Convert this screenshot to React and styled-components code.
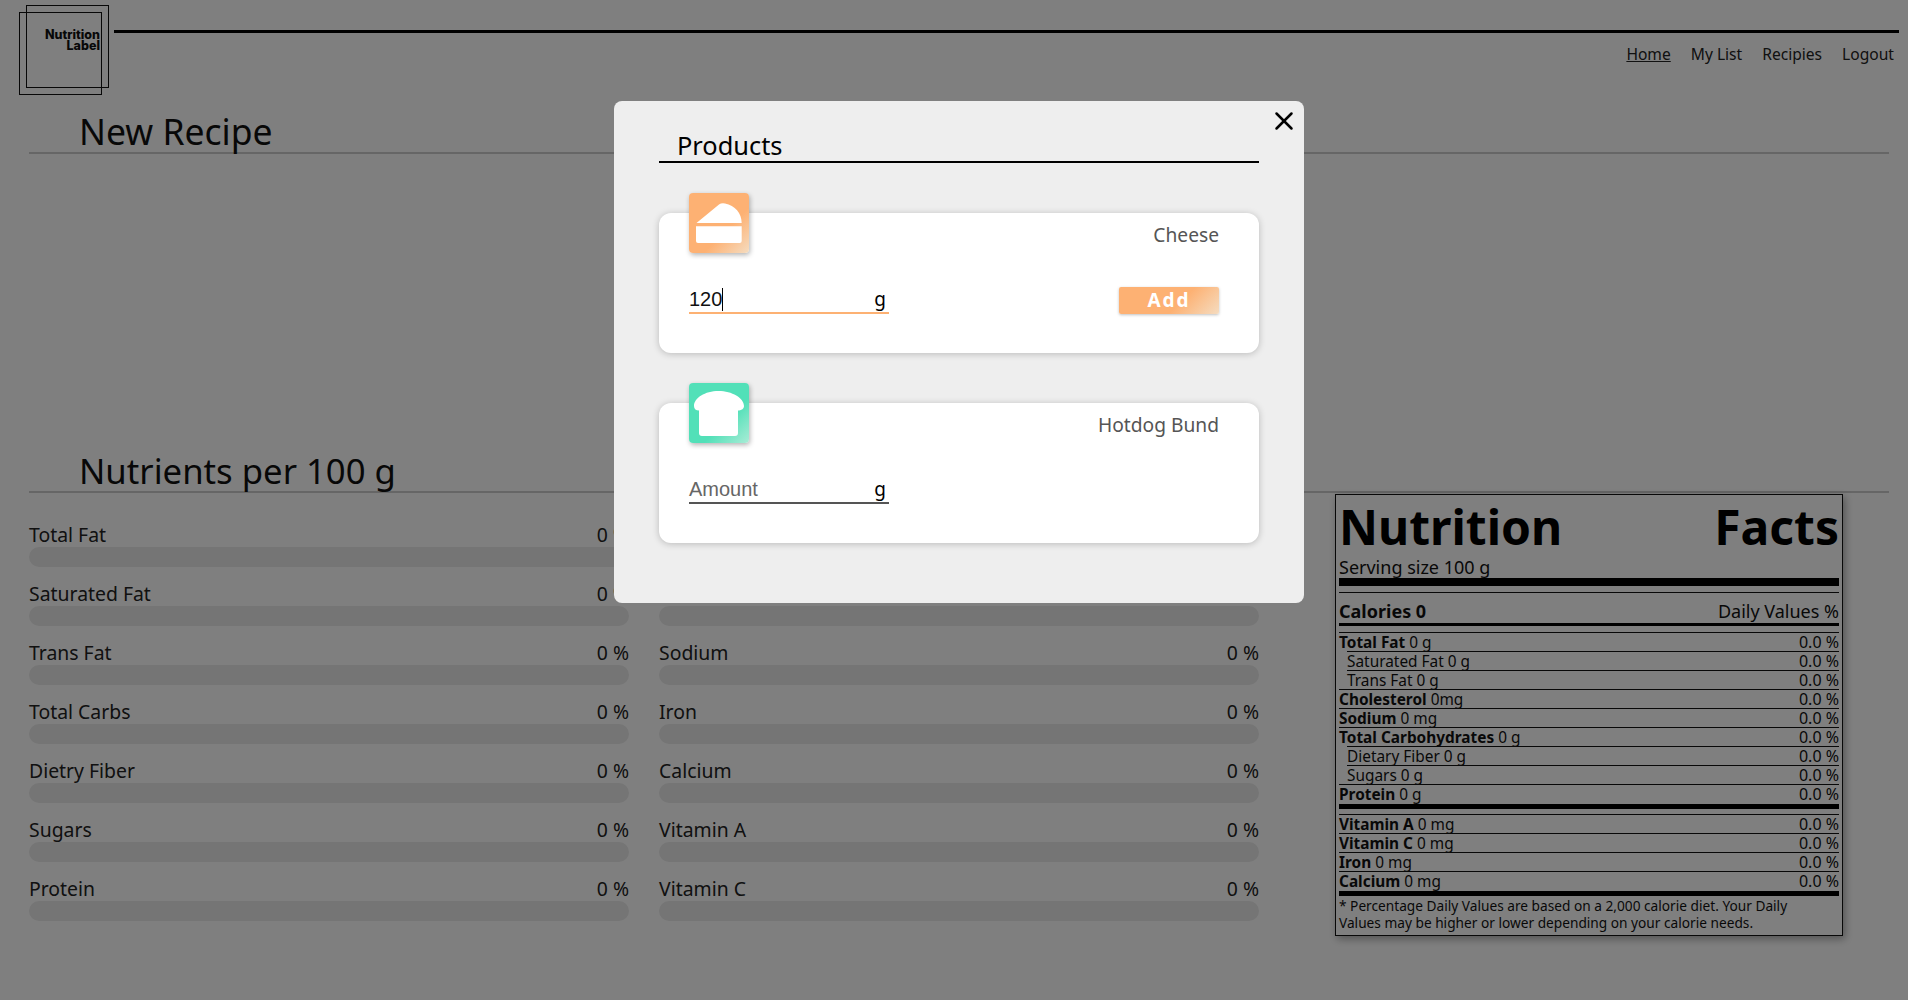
import React from "react";
import styled, { createGlobalStyle } from "styled-components";
import { X } from "lucide-react";

const Global = createGlobalStyle`
  html, body { margin: 0; padding: 0; background: #fff; }
  body { font-family: "Noto Sans", sans-serif; color: #222; overflow: hidden; }
  * { box-sizing: border-box; }
`;

const Page = styled.div`
  width: 1908px;
  height: 1000px;
  display: flex;
  flex-direction: column;
`;
const Header = styled.header`
  display: flex;
  height: 100px;
  padding: 5px 9px 0 19px;
`;
const Logo = styled.div`
  position: relative;
  width: 90px;
  height: 90px;
  flex: none;
`;
const LogoSquare = styled.span`
  position: absolute;
  width: 83px;
  height: 83px;
  border: 1px solid #111;
  ${(p) => (p.$back ? "left: 7px; top: 0;" : "left: 0; top: 7px;")}
`;
const LogoText = styled.div`
  position: absolute;
  right: 9px;
  top: 24px;
  text-align: right;
  font: 800 12.5px/11px Inter, sans-serif;
  color: #111;
`;
const HeaderMain = styled.div`
  flex: 1;
  margin-left: 5px;
  padding-top: 25px;
`;
const HeaderRule = styled.div`
  height: 3px;
  background: #000;
`;
const Nav = styled.nav`
  display: flex;
  justify-content: flex-end;
  gap: 20px;
  padding: 10px 5px 0 0;
  font-size: 15.6px;
  line-height: 22px;
`;
const NavLink = styled.a`
  color: #222;
  text-decoration: ${(p) => (p.$active ? "underline" : "none")};
`;
const SectionTitle = styled.h2`
  margin: ${(p) => p.$top}px 19px 0 29px;
  padding-left: 50px;
  height: ${(p) => p.$h}px;
  font-size: ${(p) => p.$size}px;
  line-height: 40px;
  font-weight: 400;
  color: #111;
  border-bottom: 2px solid #ccc;
`;
const Spacer = styled.div`
  height: 297px;
`;
const Body = styled.div`
  display: flex;
  align-items: flex-start;
  padding-left: 29px;
`;
const Grid = styled.div`
  width: 1230px;
  padding-top: 30px;
  display: grid;
  grid-template-columns: 600px 600px;
  column-gap: 30px;
  row-gap: 15px;
`;
const Nutrient = styled.div`
  display: flex;
  flex-direction: column;
`;
const NutrientHead = styled.div`
  display: flex;
  justify-content: space-between;
  height: 24px;
  font-size: 19.4px;
  line-height: 23px;
`;
const Bar = styled.div`
  height: 20px;
  border-radius: 10px;
  background: #ebebeb;
`;
const Label = styled.aside`
  width: 508px;
  height: 442px;
  margin: 1px 0 0 76px;
  padding: 0 3px;
  border: 1px solid #111;
  box-shadow: 2px 3px 8px rgba(0, 0, 0, 0.35);
  color: #111;
`;
const LabelTitle = styled.div`
  display: flex;
  justify-content: space-between;
  height: 60px;
  padding: 2px 0 0;
  font-size: 48px;
  line-height: 60px;
  font-weight: 700;
  color: #000;
`;
const Serving = styled.div`
  font-size: 18px;
  line-height: 24px;
  height: 23px;
`;
const ThickRule = styled.div`
  height: ${(p) => p.$h}px;
  background: #000;
`;
const ThinRule = styled.div`
  height: 1px;
  margin-top: ${(p) => p.$top}px;
  background: #111;
`;
const Calories = styled.div`
  display: flex;
  justify-content: space-between;
  height: 30px;
  padding-top: 3px;
  font-size: 18px;
  line-height: 30px;
`;
const Strong = styled.b`
  font-weight: 700;
`;
const FactRow = styled.div`
  display: flex;
  justify-content: space-between;
  height: 19px;
  font-size: 15.4px;
  line-height: 19px;
  white-space: nowrap;
`;
const FactName = styled.div`
  flex: 1;
  padding-left: ${(p) => (p.$sub ? 8 : 0)}px;
`;
const FactValue = styled.div`
  flex: none;
  font-size: 16px;
  line-height: 18px;
`;
const FactLine = styled.div`
  height: 1px;
  margin-left: ${(p) => (p.$sub ? 8 : 0)}px;
  margin-top: -1px;
  position: relative;
  background: #111;
`;
const Foot = styled.div`
  margin-top: 1px;
  font-size: 13.7px;
  line-height: 17px;
`;
const Overlay = styled.div`
  position: fixed;
  inset: 0;
  background: rgba(0, 0, 0, 0.5);
`;
const Modal = styled.div`
  position: fixed;
  left: 614px;
  top: 101px;
  width: 690px;
  height: 502px;
  padding: 0 45px;
  border-radius: 8px;
  background: #eee;
`;
const Close = styled.button`
  position: absolute;
  top: 5px;
  right: 5px;
  padding: 0;
  border: 0;
  background: none;
  display: flex;
  color: #000;
`;
const ModalTitle = styled.h3`
  margin: 0;
  height: 62px;
  padding: 28px 0 0 18px;
  font-size: 25.4px;
  line-height: 33px;
  font-weight: 400;
  color: #000;
  border-bottom: 2px solid #000;
`;
const Cards = styled.div`
  display: flex;
  flex-direction: column;
  gap: 50px;
  margin-top: 50px;
`;
const Card = styled.div`
  position: relative;
  height: 140px;
  padding: 0 40px 0 30px;
  border-radius: 12px;
  background: #fff;
  box-shadow: 0 1px 7px rgba(0, 0, 0, 0.22);
`;
const IconBox = styled.div`
  position: absolute;
  left: 30px;
  top: -20px;
  width: 60px;
  height: 60px;
  border-radius: 4px;
  background: linear-gradient(135deg, ${(p) => p.$from} 62%, ${(p) => p.$to} 100%);
  box-shadow: 1px 2px 5px rgba(0, 0, 0, 0.3);
`;
const Name = styled.div`
  padding-top: 10px;
  height: 60px;
  text-align: right;
  font-size: 19.2px;
  line-height: 24px;
  color: #555;
`;
const Row = styled.div`
  display: flex;
  justify-content: space-between;
  align-items: flex-end;
  height: 26px;
  margin-top: 15px;
`;
const Field = styled.div`
  width: 200px;
  height: 26px;
  display: flex;
  align-items: flex-start;
  justify-content: space-between;
  border-bottom: 2px solid ${(p) => p.$color};
  font: 20px/22px "Liberation Sans", sans-serif;
`;
const Value = styled.span`
  color: ${(p) => (p.$placeholder ? "#666" : "#111")};
  height: 23px;
  ${(p) => (p.$caret ? "border-right: 1px solid #000;" : "")}
`;
const Unit = styled.span`
  margin-top: -1px;
  padding-right: 3px;
  font: 19px/24px "Noto Sans", sans-serif;
  color: #000;
`;
const AddButton = styled.button`
  width: 100px;
  height: 27px;
  flex: none;
  padding: 0;
  border: 0;
  border-radius: 2px;
  background: linear-gradient(135deg, #fdb173 60%, #f5dcc0 100%);
  box-shadow: 0 1px 3px rgba(0, 0, 0, 0.25);
  color: #fff;
  font: 700 19px/27px "Noto Sans", sans-serif;
  letter-spacing: 2px;
`;

const left = ["Total Fat", "Saturated Fat", "Trans Fat", "Total Carbs", "Dietry Fiber", "Sugars", "Protein"];
const right = ["Cholesterol", "Salt", "Sodium", "Iron", "Calcium", "Vitamin A", "Vitamin C"];
const cells = left.flatMap((l, i) => [l, right[i]]);

const facts = [
  ["Total Fat", "0 g"],
  ["Saturated Fat", "0 g", true],
  ["Trans Fat", "0 g", true],
  ["Cholesterol", "0mg"],
  ["Sodium", "0 mg"],
  ["Total Carbohydrates", "0 g"],
  ["Dietary Fiber", "0 g", true],
  ["Sugars", "0 g", true],
  ["Protein", "0 g"],
];
const vitamins = [
  ["Vitamin A", "0 mg"],
  ["Vitamin C", "0 mg"],
  ["Iron", "0 mg"],
  ["Calcium", "0 mg"],
];

const Fact = ({ name, amount, sub, first }) => (
  <>
    {!first && <FactLine $sub={sub} />}
    <FactRow>
      <FactName $sub={sub}>
        {sub ? name : <Strong>{name}</Strong>} {amount}
      </FactName>
      <FactValue>0.0 %</FactValue>
    </FactRow>
  </>
);

const Cheese = () => (
  <svg width="60" height="60" viewBox="0 0 60 60" fill="#fff">
    <path d="M7.5 30 L30 11.5 Q32.5 9.6 36 10.4 C46 12.5 52.7 20 52.7 30 Z" />
    <path d="M7 33.3 H52.7 V48 Q52.7 50 50.7 50 H9 Q7 50 7 48 Z" />
  </svg>
);
const Bread = () => (
  <svg width="60" height="60" viewBox="0 0 60 60" fill="#fff">
    <path d="M29.5 8 C43 8 55 15 55 23 C55 26 52 27.5 49 27.5 L49 50 Q49 53 46 53 L13 53 Q10 53 10 50 L10 27.5 C7 27.5 5 26 5 23 C5 15 16 8 29.5 8 Z" />
  </svg>
);

export default function App() {
  return (
    <>
      <Global />
      <Page>
        <Header>
          <Logo>
            <LogoSquare $back />
            <LogoSquare />
            <LogoText>
              Nutrition
              <br />
              Label
            </LogoText>
          </Logo>
          <HeaderMain>
            <HeaderRule />
            <Nav>
              <NavLink $active>Home</NavLink>
              <NavLink>My List</NavLink>
              <NavLink>Recipies</NavLink>
              <NavLink>Logout</NavLink>
            </Nav>
          </HeaderMain>
        </Header>
        <SectionTitle $top={11} $h={43} $size={35.5}>New Recipe</SectionTitle>
        <Spacer />
        <SectionTitle $top={0} $h={42} $size={34.7}>Nutrients per 100 g</SectionTitle>
        <Body>
          <Grid>
            {cells.map((c) => (
              <Nutrient key={c}>
                <NutrientHead>
                  <span>{c}</span>
                  <span>0 %</span>
                </NutrientHead>
                <Bar />
              </Nutrient>
            ))}
          </Grid>
          <Label>
            <LabelTitle>
              <span>Nutrition</span>
              <span>Facts</span>
            </LabelTitle>
            <Serving>Serving size 100 g</Serving>
            <ThickRule $h={8} />
            <ThinRule $top={6} />
            <Calories>
              <Strong>Calories 0</Strong>
              <span>Daily Values %</span>
            </Calories>
            <ThickRule $h={3} />
            <ThinRule $top={6} />
            {facts.map(([n, a, s], i) => (
              <Fact key={n} name={n} amount={a} sub={s} first={i === 0} />
            ))}
            <ThickRule $h={5} />
            <ThinRule $top={5} />
            {vitamins.map(([n, a], i) => (
              <Fact key={n} name={n} amount={a} first={i === 0} />
            ))}
            <ThickRule $h={5} />
            <Foot>
              * Percentage Daily Values are based on a 2,000 calorie diet. Your Daily
              <br />
              Values may be higher or lower depending on your calorie needs.
            </Foot>
          </Label>
        </Body>
      </Page>
      <Overlay />
      <Modal>
        <Close aria-label="Close">
          <X size={30} strokeWidth={2} />
        </Close>
        <ModalTitle>Products</ModalTitle>
        <Cards>
          <Card>
            <IconBox $from="#fdb173" $to="#f5dcc0">
              <Cheese />
            </IconBox>
            <Name>Cheese</Name>
            <Row>
              <Field $color="#fdb173">
                <Value $caret>120</Value>
                <Unit>g</Unit>
              </Field>
              <AddButton>Add</AddButton>
            </Row>
          </Card>
          <Card>
            <IconBox $from="#52e0b8" $to="#a9ecd6">
              <Bread />
            </IconBox>
            <Name>Hotdog Bund</Name>
            <Row>
              <Field $color="#555">
                <Value $placeholder>Amount</Value>
                <Unit>g</Unit>
              </Field>
            </Row>
          </Card>
        </Cards>
      </Modal>
    </>
  );
}
